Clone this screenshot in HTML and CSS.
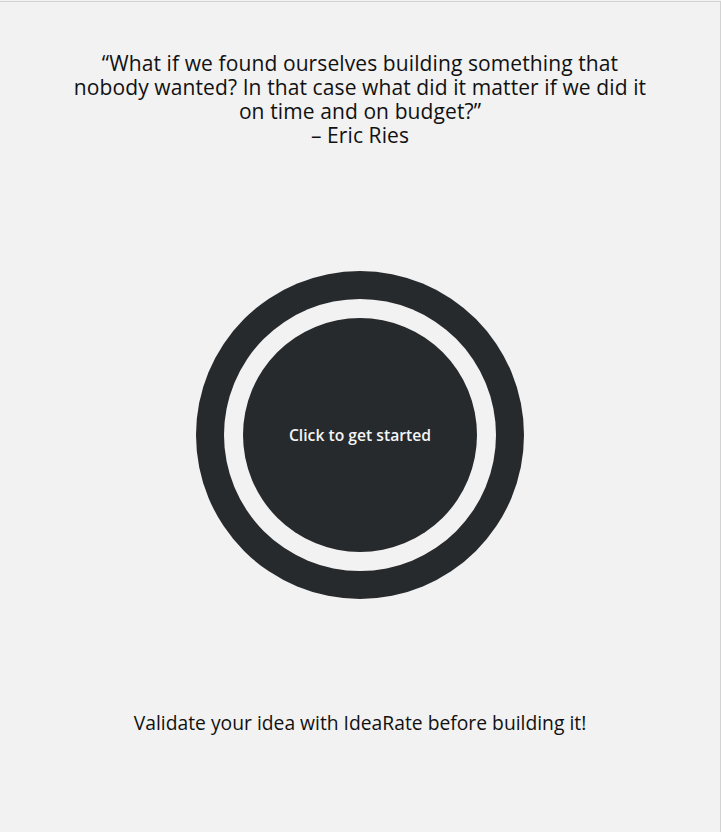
FILE: index.html
```html
<!DOCTYPE html>
<html>
<head>
<meta charset="utf-8">
<link rel="stylesheet" href="styles.css">
</head>
<body>
<div class="page">
  <div class="quote">“What if we found ourselves building something that<br>nobody wanted? In that case what did it matter if we did it<br>on time and on budget?”<br>– Eric Ries</div>
  <div class="stage">
    <div class="outer">
      <div class="gap">
        <div class="inner">Click to get started</div>
      </div>
    </div>
  </div>
  <div class="tagline">Validate your idea with IdeaRate before building it!</div>
</div>
</body>
</html>
```
FILE: styles.css
```css
html, body {
  margin: 0;
  padding: 0;
  background: #f2f2f2;
}
body {
  font-family: "Open Sans", "DejaVu Sans", sans-serif;
  color: #111;
}
.page {
  box-sizing: border-box;
  width: 721px;
  height: 832px;
  margin-top: 1px;
  border-top: 1px solid #d2d2d2;
  border-right: 1px solid #d2d2d2;
  display: flex;
  flex-direction: column;
  align-items: center;
}
.quote {
  margin-top: 49px;
  font-size: 21px;
  letter-spacing: 0.1px;
  line-height: 24px;
  text-align: center;
}
.stage {
  margin-top: 124px;
  display: flex;
  justify-content: center;
}
.outer {
  width: 328px;
  height: 328px;
  border-radius: 50%;
  background: #262a2d;
  display: flex;
  align-items: center;
  justify-content: center;
}
.gap {
  width: 272px;
  height: 272px;
  border-radius: 50%;
  background: #f2f2f2;
  display: flex;
  align-items: center;
  justify-content: center;
}
.inner {
  width: 234px;
  height: 234px;
  border-radius: 50%;
  background: #262a2d;
  color: #f4f4f4;
  font-size: 15.7px;
  font-weight: 600;
  display: flex;
  align-items: center;
  justify-content: center;
}
.tagline {
  margin-top: 112px;
  font-size: 19.3px;
  line-height: 24px;
}
```
